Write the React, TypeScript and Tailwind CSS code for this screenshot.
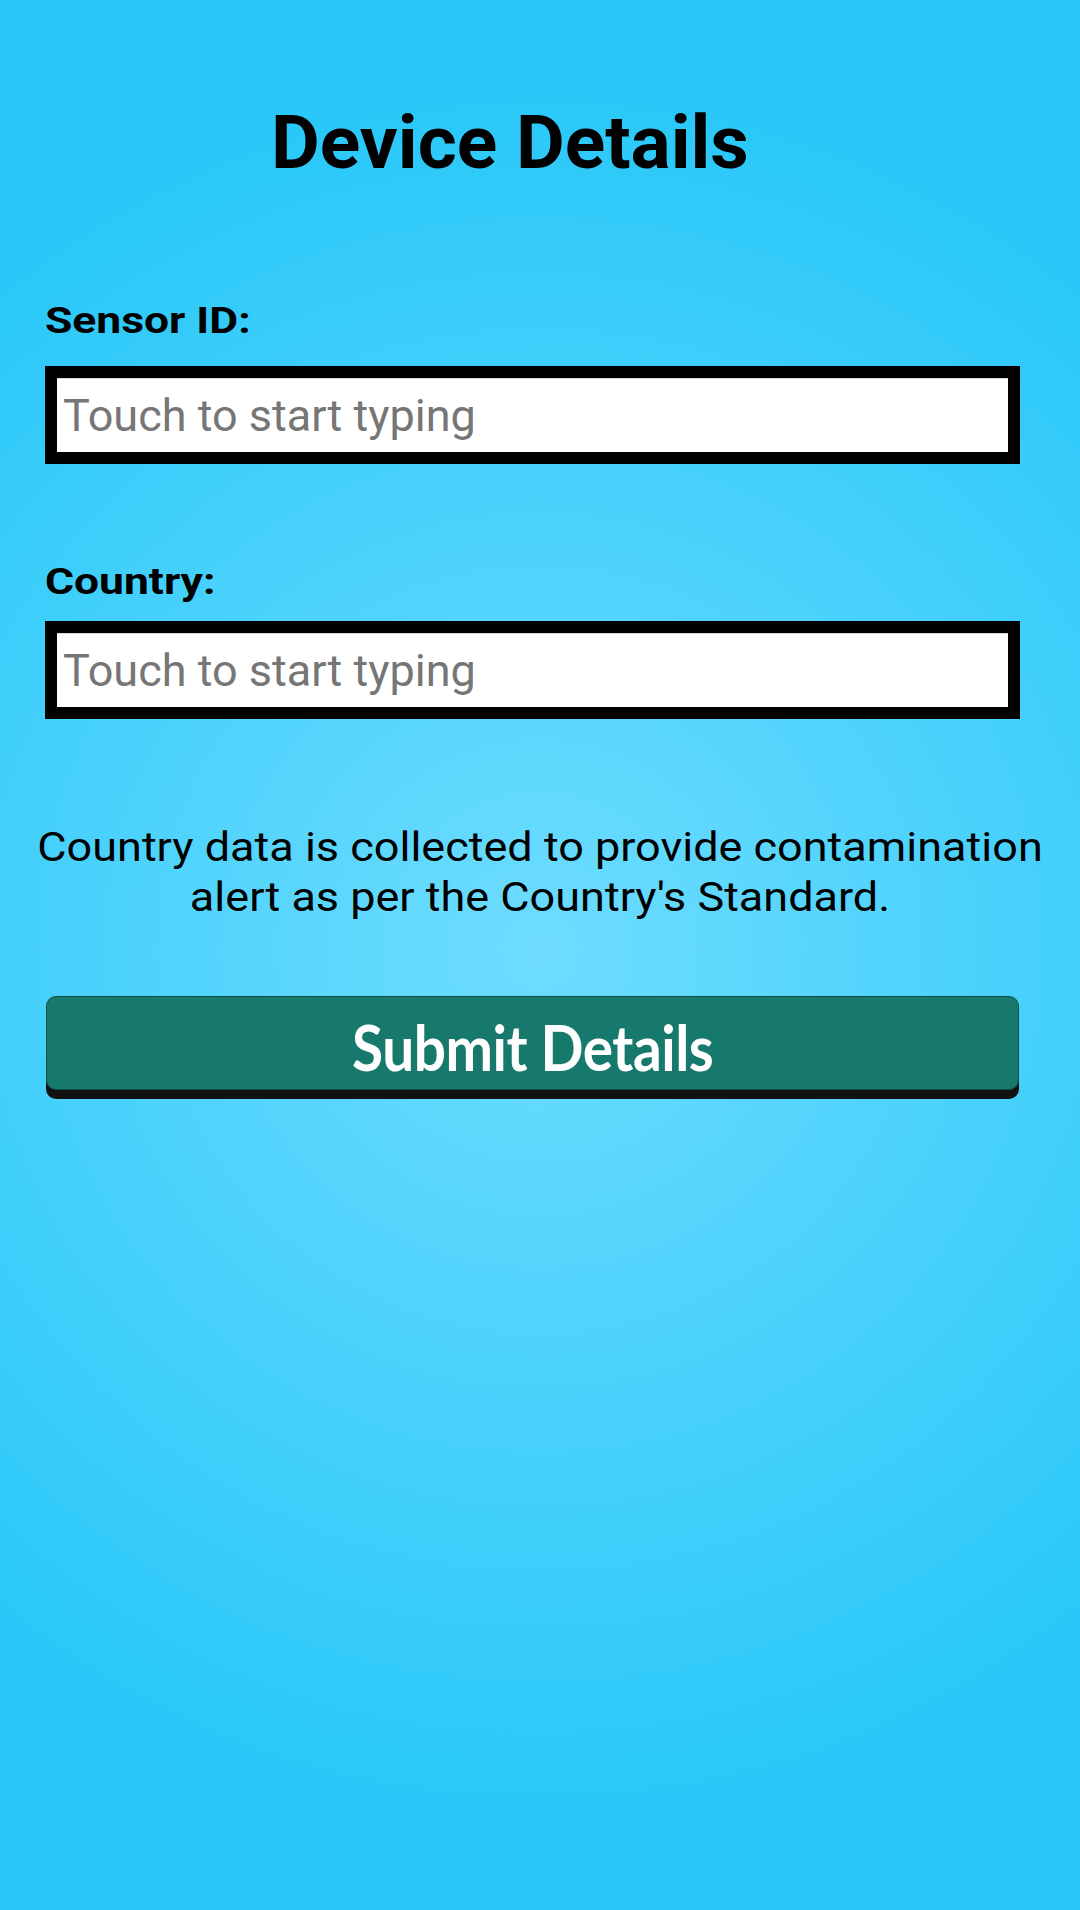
import React from "react";

function Field({ label, top, gap }: { label: string; top: string; gap: string }) {
  return (
    <div className={`flex flex-col ${top}`}>
      <label className="ml-[45px] self-start origin-left scale-x-[1.2] text-[37px] leading-[44px] font-bold text-black">
        {label}
      </label>
      <div className={`ml-[45px] mr-[60px] h-[98px] border-[12px] border-black bg-white shadow-[inset_0_1px_0_#d8d8d8] ${gap}`}>
        <input
          type="text"
          placeholder="Touch to start typing"
          className="h-full w-full bg-transparent pl-[6px] text-[45px] leading-[74px] text-black outline-none placeholder:text-[#767676]"
        />
      </div>
    </div>
  );
}

export default function App() {
  return (
    <div className="min-h-[1910px] w-full overflow-hidden font-['Roboto','Liberation_Sans',sans-serif] bg-[radial-gradient(circle_850px_at_50%_950px,#6edcff,#2ac8f8)]">
      {/* Title */}
      <h1 className="pt-[98px] pr-[60px] text-center text-[75px] leading-[88px] font-bold text-black">
        Device Details
      </h1>

      <Field label="Sensor ID:" top="mt-[113px]" gap="mt-[23px]" />
      <Field label="Country:" top="mt-[96px]" gap="mt-[17px]" />

      {/* Info text */}
      <div className="mt-[104px] flex justify-center">
        <p className="w-[920px] scale-x-[1.125] text-center text-[40px] leading-[50px] text-black">
          Country data is collected to provide contamination alert as per the Country's Standard.
        </p>
      </div>

      {/* Submit button */}
      <div className="mt-[73px] pl-[46px] pr-[61px]">
        <button className="flex h-[94px] w-full items-center justify-center rounded-[10px] border border-[#0e4f46] bg-[#17796b] shadow-[0_9px_0_#121212]">
          <span className="mt-[8px] scale-x-[0.9] font-['Lato','Open_Sans',sans-serif] text-[63px] leading-[76px] font-bold tracking-[-0.5px] text-white">
            Submit Details
          </span>
        </button>
      </div>
    </div>
  );
}
